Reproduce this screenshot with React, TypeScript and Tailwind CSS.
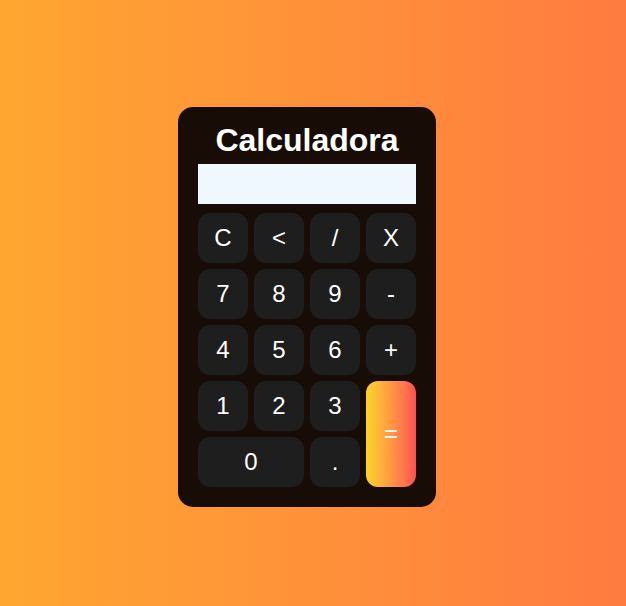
import React from 'react';

const keys = ['C', '<', '/', 'X', '7', '8', '9', '-', '4', '5', '6', '+', '1', '2', '3'];

export default function App() {
  return (
    <div
      className="min-h-screen w-full flex items-center justify-center pr-[12px] pt-[8px] bg-gradient-to-r from-[#ffa630] to-[#ff7b40]"
      style={{ fontFamily: '"Liberation Sans", Arial, sans-serif' }}
    >
      <div className="w-[258px] rounded-[15px] bg-[#170d06] px-5 pt-[15px] pb-5">
        {/* Title */}
        <h1 className="text-center text-[32px] font-bold leading-[37px] text-white mb-[5px]">Calculadora</h1>

        {/* Display */}
        <div className="h-[40px] w-full bg-[#f0f8ff] mb-[9px]"></div>

        {/* Keypad */}
        <div className="grid grid-cols-[repeat(4,50px)] grid-rows-[repeat(5,50px)] gap-[6px]">
          {keys.map((k) => (
            <button
              key={k}
              className="rounded-[12px] bg-[#1e1e1e] text-white text-[24px] flex items-center justify-center"
            >
              {k}
            </button>
          ))}
          <button className="row-span-2 col-start-4 row-start-4 rounded-[12px] bg-gradient-to-r from-[#f9d423] to-[#ff4e50] text-white text-[24px] flex items-center justify-center">
            =
          </button>
          <button className="col-span-2 rounded-[12px] bg-[#1e1e1e] text-white text-[24px] flex items-center justify-center">
            0
          </button>
          <button className="rounded-[12px] bg-[#1e1e1e] text-white text-[24px] flex items-center justify-center">
            .
          </button>
        </div>
      </div>
    </div>
  );
}
